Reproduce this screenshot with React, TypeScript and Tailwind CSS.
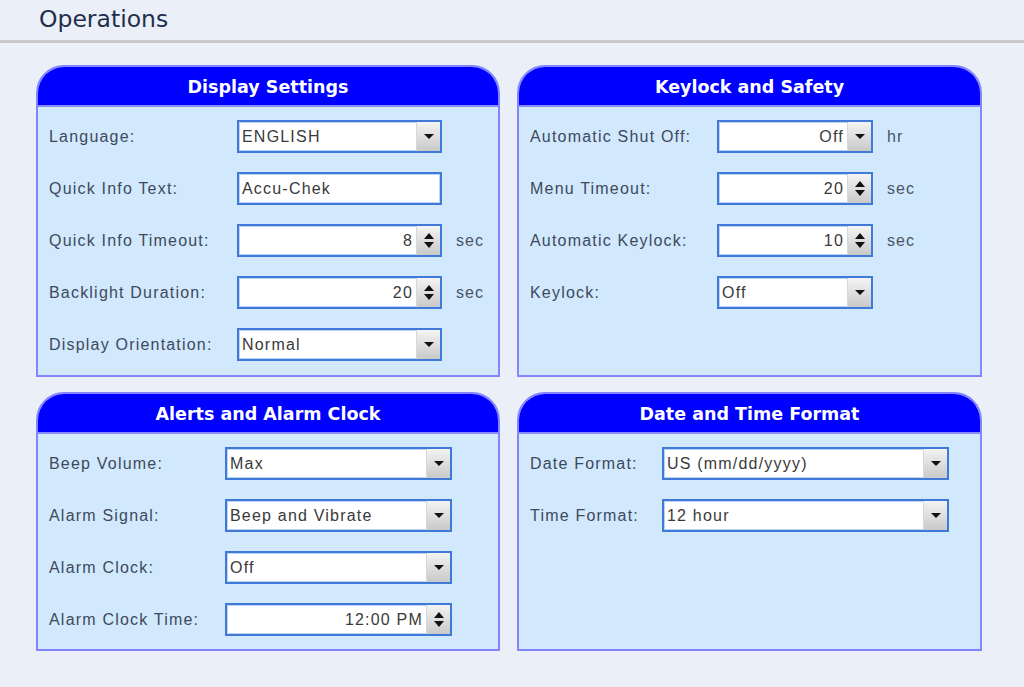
import type { ReactNode } from "react";

type Field = {
  label: string;
  value: string;
  kind: "select" | "text" | "spin";
  align?: "left" | "right";
  unit?: string;
};

const DropButton = () => (
  <div className="flex h-full w-[24px] items-center justify-center border-l border-[#d8d8d8] bg-gradient-to-b from-[#f4f4f4] to-[#c9c9c9]">
    <svg width="10" height="5" viewBox="0 0 10 5">
      <polygon points="0,0 10,0 5,5" fill="#111" />
    </svg>
  </div>
);

const SpinButton = () => (
  <div className="flex h-full w-[24px] flex-col items-center justify-center gap-[3px] border-l border-[#d8d8d8] bg-gradient-to-b from-[#f4f4f4] to-[#c9c9c9]">
    <svg width="10" height="6" viewBox="0 0 10 6">
      <polygon points="5,0 10,6 0,6" fill="#111" />
    </svg>
    <svg width="10" height="6" viewBox="0 0 10 6">
      <polygon points="0,0 10,0 5,6" fill="#111" />
    </svg>
  </div>
);

const Control = ({ field, width }: { field: Field; width: number }) => {
  const right = field.align === "right";
  return (
    <div
      className="flex h-[33px] shrink-0 items-stretch border-2 border-[#3f7ad9] bg-white shadow-[inset_0_0_0_1px_#bcd3f3]"
      style={{ width }}
    >
      <div
        className={`flex flex-1 items-center overflow-hidden whitespace-nowrap px-[3px] text-[16px] tracking-[1.2px] text-[#3a3a3a] ${right ? "justify-end" : "justify-start"}`}
      >
        {field.value}
      </div>
      {field.kind === "select" && <DropButton />}
      {field.kind === "spin" && <SpinButton />}
    </div>
  );
};

const Row = ({
  label,
  labelWidth,
  children,
}: {
  label: string;
  labelWidth: number;
  children: ReactNode;
}) => (
  <div className="flex items-center">
    <span
      className="shrink-0 whitespace-nowrap text-[16px] tracking-[1.2px] text-[#3d4a5c]"
      style={{ width: labelWidth }}
    >
      {label}
    </span>
    {children}
  </div>
);

const Panel = ({
  title,
  labelWidth,
  inputWidth,
  fields,
}: {
  title: string;
  labelWidth: number;
  inputWidth: number;
  fields: Field[];
}) => (
  <div className="flex flex-col overflow-hidden rounded-t-[28px] border-2 border-[#8585ff] bg-[#d2e8fd]">
    <div className="flex h-[40px] shrink-0 items-center justify-center border-b-2 border-[#8a8aff] bg-[#0000ff] pt-[2px] font-['DejaVu_Sans',sans-serif] text-[17.5px] font-bold text-white">
      {title}
    </div>
    <div className="flex flex-col gap-[19px] pl-[11px] pt-[13px]">
      {fields.map((f) => (
        <Row key={f.label} label={f.label} labelWidth={labelWidth}>
          <Control field={f} width={inputWidth} />
          {f.unit && (
            <span className="ml-[14px] text-[16px] tracking-[1px] text-[#4a5566]">{f.unit}</span>
          )}
        </Row>
      ))}
    </div>
  </div>
);

export default function App() {
  return (
    <div className="min-h-[687px] bg-[#ebf0f8] font-['Liberation_Sans',Arial,sans-serif]">
      <div className="flex h-[40px] items-center pl-[39px] font-['DejaVu_Sans',sans-serif] text-[23.5px] text-[#222f4c]">
        Operations
      </div>
      <div className="h-[3px] bg-[#c9c9c9]" />
      <div className="grid grid-cols-[464px_465px] grid-rows-[312px_259px] gap-x-[17px] gap-y-[15px] pl-[36px] pt-[22px]">
        <Panel
          title="Display Settings"
          labelWidth={188}
          inputWidth={205}
          fields={[
            { label: "Language:", value: "ENGLISH", kind: "select" },
            { label: "Quick Info Text:", value: "Accu-Chek", kind: "text" },
            { label: "Quick Info Timeout:", value: "8", kind: "spin", align: "right", unit: "sec" },
            { label: "Backlight Duration:", value: "20", kind: "spin", align: "right", unit: "sec" },
            { label: "Display Orientation:", value: "Normal", kind: "select" },
          ]}
        />
        <Panel
          title="Keylock and Safety"
          labelWidth={187}
          inputWidth={156}
          fields={[
            { label: "Automatic Shut Off:", value: "Off", kind: "select", align: "right", unit: "hr" },
            { label: "Menu Timeout:", value: "20", kind: "spin", align: "right", unit: "sec" },
            { label: "Automatic Keylock:", value: "10", kind: "spin", align: "right", unit: "sec" },
            { label: "Keylock:", value: "Off", kind: "select" },
          ]}
        />
        <Panel
          title="Alerts and Alarm Clock"
          labelWidth={176}
          inputWidth={227}
          fields={[
            { label: "Beep Volume:", value: "Max", kind: "select" },
            { label: "Alarm Signal:", value: "Beep and Vibrate", kind: "select" },
            { label: "Alarm Clock:", value: "Off", kind: "select" },
            { label: "Alarm Clock Time:", value: "12:00 PM", kind: "spin", align: "right" },
          ]}
        />
        <Panel
          title="Date and Time Format"
          labelWidth={132}
          inputWidth={287}
          fields={[
            { label: "Date Format:", value: "US (mm/dd/yyyy)", kind: "select" },
            { label: "Time Format:", value: "12 hour", kind: "select" },
          ]}
        />
      </div>
    </div>
  );
}
